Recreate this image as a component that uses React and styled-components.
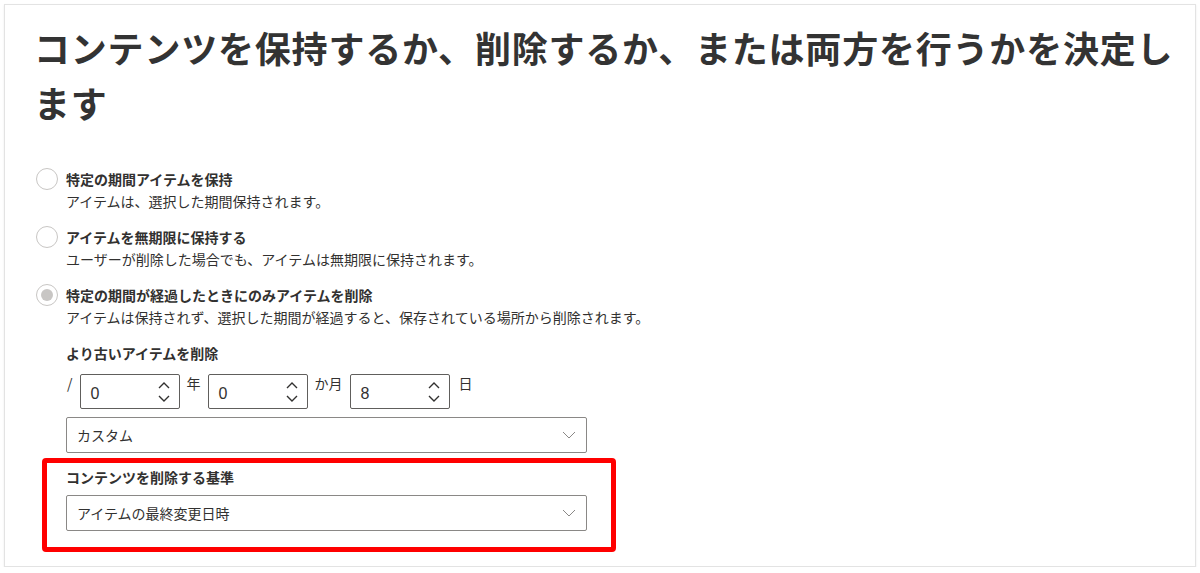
import styled, { createGlobalStyle } from 'styled-components';

const GlobalStyle = createGlobalStyle`
  html, body {
    margin: 0;
    padding: 0;
    background: #ffffff;
  }
  body {
    font-family: "Noto Sans CJK JP", "Noto Sans", sans-serif;
    color: #323130;
  }
`;

const Card = styled.div`
  box-sizing: border-box;
  margin: 4px 0 0 4px;
  width: 1192px;
  height: 563px;
  border: 1px solid #e3e3e3;
  box-shadow: 0 1px 2px rgba(0, 0, 0, 0.08);
  padding: 15px 6px 0 31px;
  overflow: hidden;
`;

const Title = styled.h1`
  margin: 0 0 38px -2px;
  font-size: 36px;
  font-weight: 700;
  line-height: 55px;
  letter-spacing: 0.8px;
  color: #333333;
`;

const Options = styled.div`
  display: flex;
  flex-direction: column;
  gap: 14px;
`;

const Option = styled.label`
  display: flex;
  gap: 8px;
  align-items: flex-start;
`;

const Circle = styled.span`
  box-sizing: border-box;
  flex: none;
  width: 22px;
  height: 22px;
  border-radius: 50%;
  border: 1px solid #c8c6c4;
  background: #fff;
  display: flex;
  align-items: center;
  justify-content: center;

  &::after {
    content: '';
    display: ${(p) => (p.$checked ? 'block' : 'none')};
    width: 12px;
    height: 12px;
    border-radius: 50%;
    background: #c8c6c4;
  }
`;

const OptionText = styled.div`
  display: flex;
  flex-direction: column;
`;

const OptionLabel = styled.span`
  font-size: 14px;
  font-weight: 700;
  line-height: 22px;
`;

const OptionDesc = styled.span`
  font-size: 14px;
  line-height: 22px;
`;

const Sub = styled.div`
  padding-left: 30px;
  margin-top: 14px;
  display: flex;
  flex-direction: column;
`;

const FieldLabel = styled.div`
  font-size: 14px;
  font-weight: 700;
  line-height: 22px;
`;

const DurationRow = styled.div`
  display: flex;
  align-items: flex-start;
  gap: 7px;
  margin-top: 10px;
`;

const Unit = styled.span`
  font-size: 14px;
  line-height: 18px;
  margin-left: ${(p) => p.$ml || 0}px;
`;

const SpinBox = styled.div`
  box-sizing: border-box;
  width: 100px;
  height: 35px;
  border: 1px solid #605e5c;
  border-radius: 2px;
  display: flex;
  align-items: center;
  justify-content: space-between;
  padding: 0 9px 0 10px;
`;

const SpinValue = styled.span`
  font-family: "Liberation Sans", Arial, sans-serif;
  font-size: 16px;
  color: #323130;
  padding-top: 4px;
`;

const Arrows = styled.div`
  display: flex;
  flex-direction: column;
  gap: 6px;
`;

const Select = styled.div`
  box-sizing: border-box;
  width: 521px;
  height: 36px;
  border: 1px solid #8a8886;
  border-radius: 2px;
  display: flex;
  align-items: center;
  justify-content: space-between;
  padding: 0 10px;
  font-size: 14px;
  margin-top: ${(p) => p.$mt || 0}px;
`;

const Highlight = styled.div`
  box-sizing: border-box;
  width: 574px;
  margin: 5px 0 0 -24px;
  border: 5px solid #ff0000;
  border-radius: 4px;
  padding: 3px 24px 16px 19px;
`;

const Chevron = ({ up }) => (
  <svg width="12" height="7" viewBox="0 0 12 7">
    <path
      d={up ? 'M1 6 L6 1 L11 6' : 'M1 1 L6 6 L11 1'}
      fill="none"
      stroke="#323130"
      strokeWidth="1.4"
    />
  </svg>
);

const DropChevron = () => (
  <svg width="14" height="8" viewBox="0 0 14 8">
    <path d="M1 1 L7 7 L13 1" fill="none" stroke="#8a8886" strokeWidth="1" />
  </svg>
);

const Spin = ({ value }) => (
  <SpinBox>
    <SpinValue>{value}</SpinValue>
    <Arrows>
      <Chevron up />
      <Chevron />
    </Arrows>
  </SpinBox>
);

const options = [
  {
    label: '特定の期間アイテムを保持',
    desc: 'アイテムは、選択した期間保持されます。',
  },
  {
    label: 'アイテムを無期限に保持する',
    desc: 'ユーザーが削除した場合でも、アイテムは無期限に保持されます。',
  },
  {
    label: '特定の期間が経過したときにのみアイテムを削除',
    desc: 'アイテムは保持されず、選択した期間が経過すると、保存されている場所から削除されます。',
    checked: true,
  },
];

export default function App() {
  return (
    <>
      <GlobalStyle />
      <Card>
        <Title>コンテンツを保持するか、削除するか、または両方を行うかを決定します</Title>
        <Options>
          {options.map((o) => (
            <Option key={o.label}>
              <Circle $checked={o.checked} />
              <OptionText>
                <OptionLabel>{o.label}</OptionLabel>
                <OptionDesc>{o.desc}</OptionDesc>
              </OptionText>
            </Option>
          ))}
        </Options>
        <Sub>
          <FieldLabel>より古いアイテムを削除</FieldLabel>
          <DurationRow>
            <Unit $ml={1}>/</Unit>
            <Spin value="0" />
            <Unit>年</Unit>
            <Spin value="0" />
            <Unit>か月</Unit>
            <Spin value="8" />
            <Unit $ml={2}>日</Unit>
          </DurationRow>
          <Select $mt={8}>
            <span>カスタム</span>
            <DropChevron />
          </Select>
          <Highlight>
            <FieldLabel>コンテンツを削除する基準</FieldLabel>
            <Select $mt={7}>
              <span>アイテムの最終変更日時</span>
              <DropChevron />
            </Select>
          </Highlight>
        </Sub>
      </Card>
    </>
  );
}
